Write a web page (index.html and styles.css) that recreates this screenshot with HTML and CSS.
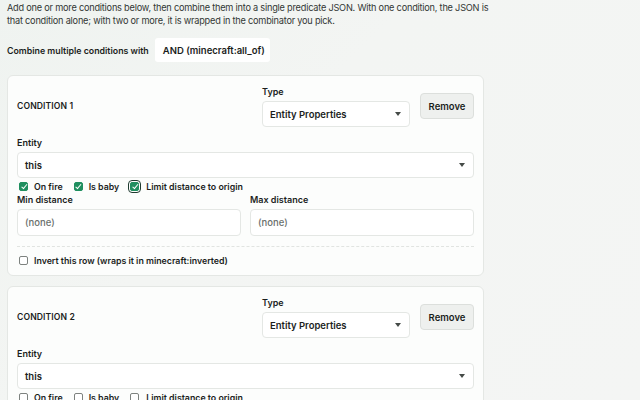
FILE: index.html
```html
<!DOCTYPE html>
<html>
<head>
<meta charset="utf-8">
<link rel="stylesheet" href="styles.css">
</head>
<body>
<div class="page">
  <p class="intro">Add one or more conditions below, then combine them into a single predicate JSON. With one condition, the JSON is that condition alone; with two or more, it is wrapped in the combinator you pick.</p>
  <div class="combine">
    <span class="label-inline">Combine multiple conditions with</span>
    <div class="combo-select"><span class="combo-text">AND (minecraft:all_of)</span></div>
  </div>

  <div class="card">
    <div class="card-head">
      <div class="cond-title">CONDITION 1</div>
      <div class="head-right">
        <div class="field type-field">
          <div class="flabel">Type</div>
          <div class="select"><span class="sval">Entity Properties</span><span class="arrow"></span></div>
        </div>
        <button class="remove">Remove</button>
      </div>
    </div>
    <div class="field entity">
      <div class="flabel">Entity</div>
      <div class="select"><span class="sval">this</span><span class="arrow"></span></div>
    </div>
    <div class="checks">
      <label class="chk"><span class="box on"></span>On fire</label>
      <label class="chk"><span class="box on"></span>Is baby</label>
      <label class="chk"><span class="box on focus"></span>Limit distance to origin</label>
    </div>
    <div class="grid2">
      <div class="field">
        <div class="flabel">Min distance</div>
        <div class="input">(none)</div>
      </div>
      <div class="field">
        <div class="flabel">Max distance</div>
        <div class="input">(none)</div>
      </div>
    </div>
    <div class="sep"></div>
    <label class="chk invert"><span class="box"></span>Invert this row (wraps it in minecraft:inverted)</label>
  </div>

  <div class="card">
    <div class="card-head">
      <div class="cond-title">CONDITION 2</div>
      <div class="head-right">
        <div class="field type-field">
          <div class="flabel">Type</div>
          <div class="select"><span class="sval">Entity Properties</span><span class="arrow"></span></div>
        </div>
        <button class="remove">Remove</button>
      </div>
    </div>
    <div class="field entity">
      <div class="flabel">Entity</div>
      <div class="select"><span class="sval">this</span><span class="arrow"></span></div>
    </div>
    <div class="checks">
      <label class="chk"><span class="box"></span>On fire</label>
      <label class="chk"><span class="box"></span>Is baby</label>
      <label class="chk"><span class="box"></span>Limit distance to origin</label>
    </div>
  </div>
</div>
</body>
</html>
```
FILE: styles.css
```css
html, body {
  margin: 0;
  padding: 0;
}
body {
  background: linear-gradient(135deg, #eff3f0 0%, #f3f5f3 40%, #f4f5f4 100%);
  font-family: Inter, "Noto Sans", sans-serif;
  color: #1b1e1c;
  font-size: 9.5px;
  overflow: hidden;
  height: 400px;
}
.page {
  width: 477px;
  margin-left: 7px;
}
.intro {
  margin: 0;
  padding-top: 1px;
  line-height: 13px;
  color: #323734;
  font-size: 9.2px;
  letter-spacing: -0.22px;
  width: 490px;
}
.combine {
  display: flex;
  align-items: center;
  gap: 6px;
  margin-top: 11px;
  height: 24px;
}
.label-inline {
  font-weight: 600;
  font-size: 8.8px;
}
.combo-select {
  width: 115px;
  height: 24px;
  background: #fff;
  border-radius: 3px;
  display: flex;
  align-items: center;
  padding-left: 8px;
  box-sizing: border-box;
  overflow: hidden;
  white-space: nowrap;
}
.combo-text {
  font-weight: 600;
  font-size: 9.5px;
}
.card {
  margin-top: 13px;
  background: #fcfdfc;
  border: 1px solid #e4e7e4;
  border-radius: 6px;
  padding: 10px 9px 9px;
}
.card + .card {
  margin-top: 10px;
}
.card-head {
  display: flex;
  align-items: center;
  justify-content: space-between;
}
.cond-title {
  font-weight: 600;
  font-size: 8.6px;
  letter-spacing: 0.1px;
  margin-top: -2px;
}
.head-right {
  display: flex;
  align-items: center;
  gap: 10px;
}
.type-field {
  width: 148px;
}
.field {
  display: flex;
  flex-direction: column;
}
.field.entity {
  margin-top: 10px;
}
.flabel {
  font-weight: 600;
  font-size: 9px;
  line-height: 12px;
  margin-bottom: 3px;
}
.select {
  height: 26px;
  background: #fff;
  border: 1px solid #e4e7e4;
  border-radius: 4px;
  box-sizing: border-box;
  display: flex;
  align-items: center;
  justify-content: space-between;
  padding: 0 8px 0 7px;
}
.sval {
  font-weight: 600;
  font-size: 9.5px;
}
.arrow {
  width: 0;
  height: 0;
  border-left: 3.5px solid transparent;
  border-right: 3.5px solid transparent;
  border-top: 4px solid #454a47;
}
.remove {
  height: 26px;
  width: 54px;
  background: #eef0ee;
  border: 1px solid #dcdfdc;
  border-radius: 4px;
  font-family: inherit;
  font-weight: 600;
  font-size: 9.5px;
  color: #1b1e1c;
  padding: 0;
  align-self: flex-start;
  margin-top: 7px;
}
.checks {
  display: flex;
  align-items: center;
  gap: 11px;
  margin-top: 2px;
  height: 12px;
}
.chk {
  display: flex;
  align-items: center;
  gap: 6px;
  font-weight: 600;
  font-size: 8.8px;
}
.box {
  width: 9px;
  height: 9px;
  border: 1px solid #7d827f;
  border-radius: 2px;
  box-sizing: border-box;
  background: #fff;
  margin-left: 2px;
  position: relative;
}
.checks .chk + .chk .box {
  margin-left: 0;
}
.box.on {
  background: #1f8f5f;
  border-color: #1f8f5f;
}
.box.on::after {
  content: "";
  position: absolute;
  left: 2.5px;
  top: 0.5px;
  width: 2px;
  height: 4.5px;
  border: solid #fff;
  border-width: 0 1.3px 1.3px 0;
  transform: rotate(40deg);
}
.box.focus {
  outline: 1.5px solid #1f3b30;
  outline-offset: 1px;
}
.checks .chk + .chk .box.focus {
  margin-left: 0;
}
.checks .chk:last-child {
  gap: 7px;
}
.grid2 {
  display: grid;
  grid-template-columns: 1fr 1fr;
  gap: 9px;
  margin-top: 2px;
}
.input {
  height: 27px;
  background: #fff;
  border: 1px solid #e4e7e4;
  border-radius: 4px;
  box-sizing: border-box;
  display: flex;
  align-items: center;
  padding: 0 7px;
  color: #6b706d;
  font-weight: 500;
  font-size: 9.5px;
}
.sep {
  margin-top: 10px;
  border-top: 1px dashed #e1e4e1;
}
.invert {
  margin-top: 7px;
  height: 12px;
}
```
